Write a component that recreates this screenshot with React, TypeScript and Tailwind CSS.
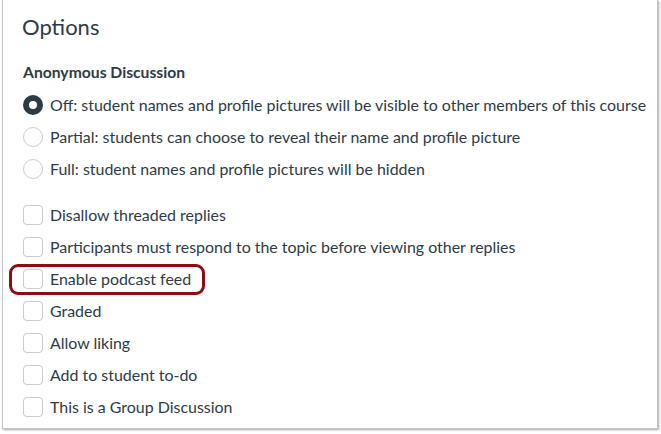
import React from "react";

const radios = [
  { label: "Off: student names and profile pictures will be visible to other members of this course", checked: true },
  { label: "Partial: students can choose to reveal their name and profile picture", checked: false },
  { label: "Full: student names and profile pictures will be hidden", checked: false },
];

const checks = [
  "Disallow threaded replies",
  "Participants must respond to the topic before viewing other replies",
  "Enable podcast feed",
  "Graded",
  "Allow liking",
  "Add to student to-do",
  "This is a Group Discussion",
];

export default function App() {
  return (
    <div className="w-[661px] h-[434px] bg-white overflow-hidden" style={{ fontFamily: "Lato, 'Open Sans', sans-serif" }}>
      <div className="ml-[2px] w-[656px] h-[429px] bg-white border-l border-r border-b border-[#c4c4c4] shadow-[1px_1px_2px_rgba(0,0,0,0.35)] pl-[20px] pt-[11px] text-[#2d3b45]">
        <div className="h-[32px] flex items-center text-[22px] leading-none -ml-[1px]">Options</div>
        <div className="mt-[20px] h-[20px] flex items-center text-[15.7px] font-bold">Anonymous Discussion</div>
        <div className="mt-[6px] flex flex-col">
          {radios.map((r) => (
            <div key={r.label} className="h-[32px] flex items-center">
              {r.checked ? (
                <span className="w-[20px] h-[20px] rounded-full border-[6px] border-[#2d3b45] bg-white shrink-0" />
              ) : (
                <span className="w-[20px] h-[20px] rounded-full border border-[#c7cdd1] bg-white shrink-0" />
              )}
              <span className="ml-[7px] text-[15.95px]">{r.label}</span>
            </div>
          ))}
        </div>
        <div className="mt-[14px] flex flex-col">
          {checks.map((c) => (
            <div key={c} className="relative h-[32px] flex items-center">
              <span className="w-[20px] h-[20px] rounded-[4px] border border-[#c7cdd1] bg-white shrink-0" />
              <span className="ml-[7px] text-[15.95px]">{c}</span>
              {c === "Enable podcast feed" && (
                <span className="absolute left-[-14px] top-[1px] w-[196px] h-[31px] rounded-[9px] border-[3px] border-[#8c0d14]" />
              )}
            </div>
          ))}
        </div>
      </div>
    </div>
  );
}
